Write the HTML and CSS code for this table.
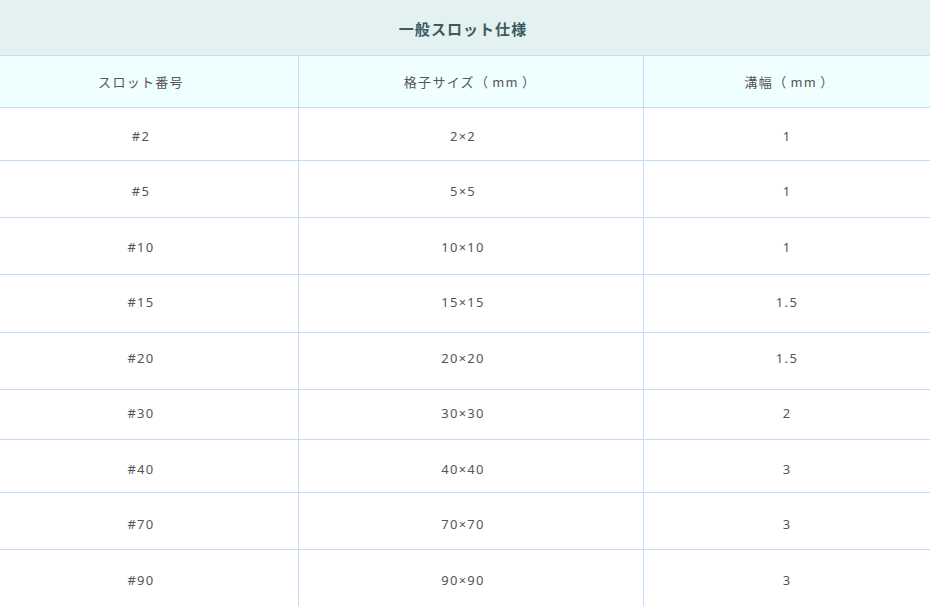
FILE: index.html
```html
<!DOCTYPE html>
<html lang="ja">
<head>
<meta charset="utf-8">
<link rel="stylesheet" href="styles.css">
</head>
<body>
<div class="spec">
  <div class="title">一般スロット仕様</div>
  <div class="row head h52">
    <div class="cell c1">スロット番号</div>
    <div class="cell c2">格子サイズ<span class="po">（</span>mm<span class="pc">）</span></div>
    <div class="cell c3">溝幅<span class="po">（</span>mm<span class="pc">）</span></div>
  </div>
  <div class="row h53 dn3"><div class="cell c1">#2</div><div class="cell c2">2×2</div><div class="cell c3">1</div></div>
  <div class="row h57 dn3"><div class="cell c1">#5</div><div class="cell c2">5×5</div><div class="cell c3">1</div></div>
  <div class="row h57 dn1"><div class="cell c1">#10</div><div class="cell c2">10×10</div><div class="cell c3">1</div></div>
  <div class="row h58 up4"><div class="cell c1">#15</div><div class="cell c2">15×15</div><div class="cell c3">1.5</div></div>
  <div class="row h57 up7"><div class="cell c1">#20</div><div class="cell c2">20×20</div><div class="cell c3">1.5</div></div>
  <div class="row h50 up4"><div class="cell c1">#30</div><div class="cell c2">30×30</div><div class="cell c3">2</div></div>
  <div class="row h53 dn5"><div class="cell c1">#40</div><div class="cell c2">40×40</div><div class="cell c3">3</div></div>
  <div class="row h57 dn5"><div class="cell c1">#70</div><div class="cell c2">70×70</div><div class="cell c3">3</div></div>
  <div class="row h57 dn3"><div class="cell c1">#90</div><div class="cell c2">90×90</div><div class="cell c3">3</div></div>
</div>
</body>
</html>
```
FILE: styles.css
```css
html, body {
  margin: 0;
  padding: 0;
  background: #ffffff;
}
body {
  font-family: "Noto Sans", "Noto Sans CJK JP", sans-serif;
  color: #555555;
  overflow: hidden;
}
.spec {
  width: 930px;
}
.title {
  box-sizing: border-box;
  height: 56px;
  border-bottom: 1px solid #c1ddf8;
  background: #e3f2f1;
  color: #3e5a5e;
  font-family: "Noto Sans CJK JP", sans-serif;
  font-weight: 700;
  font-size: 15px;
  letter-spacing: 0.07em;
  display: flex;
  align-items: center;
  justify-content: center;
  padding: 2px 4px 0 0;
}
.row {
  display: grid;
  grid-template-columns: 299px 345px 1fr;
  border-bottom: 1px solid #c1ddf8;
  box-sizing: border-box;
}
.head {
  background: #effefe;
}
.head .cell {
  font-family: "Noto Sans CJK JP", sans-serif;
  padding-top: 0;
}
.head .c2 {
  padding-right: 2px;
}
.head .c3 {
  padding-left: 5px;
}
.po {
  margin-right: 3px;
}
.pc {
  margin-left: 3px;
}
.h50 { height: 50px; }
.h52 { height: 52px; }
.h53 { height: 53px; }
.h57 { height: 57px; }
.h58 { height: 58px; }
.cell {
  display: flex;
  align-items: center;
  justify-content: center;
  font-size: 13px;
  letter-spacing: 0.1em;
  box-sizing: border-box;
}
.dn1 .cell { padding-top: 1px; }
.dn3 .cell { padding-top: 3px; }
.dn5 .cell { padding-top: 5px; }
.up4 .cell { padding-bottom: 4px; }
.up7 .cell { padding-bottom: 7px; }
.c1, .c2 {
  border-right: 1px solid #c1ddf8;
  padding-right: 16px;
}
```
